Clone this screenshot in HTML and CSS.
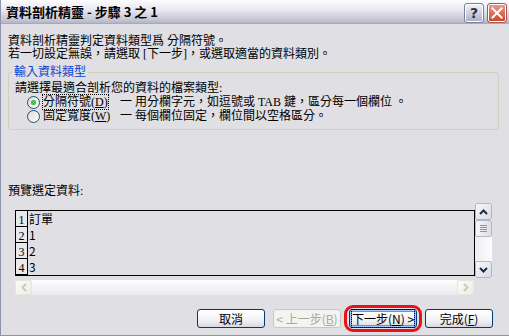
FILE: index.html
```html
<!DOCTYPE html>
<html lang="zh-Hant">
<head>
    <meta charset="UTF-8">
    <title>資料剖析精靈</title>
    <link rel="stylesheet" href="styles.css">
</head>
<body>

    <div class="window">
        <!-- Title Bar -->
        <div class="titlebar">
            <span class="title">資料剖析精靈 - 步驟 3 之 1</span>
            <div class="caption-buttons">
                <span class="cap-btn help">?</span>
                <span class="cap-btn close">
                    <svg width="12" height="12" viewBox="0 0 12 12"><path d="M1.5 1.5L10.5 10.5M10.5 1.5L1.5 10.5" stroke="#fff" stroke-width="2" stroke-linecap="square"/></svg>
                </span>
            </div>
        </div>

        <div class="content">
            <p class="intro">資料剖析精靈判定資料類型爲 分隔符號。</p>
            <p class="intro">若一切設定無誤，請選取 [下一步]，或選取適當的資料類別。</p>

            <!-- Data Type Group -->
            <fieldset class="group">
                <legend>輸入資料類型</legend>
                <p class="group-hint">請選擇最適合剖析您的資料的檔案類型:</p>
                <div class="option">
                    <span class="radio checked"></span>
                    <span class="opt-label"><span class="focus">分隔符號(<u>D</u>)</span></span>
                    <span class="opt-desc">一 用分欄字元，如逗號或 TAB 鍵，區分每一個欄位 。</span>
                </div>
                <div class="option">
                    <span class="radio"></span>
                    <span class="opt-label"><span class="nofocus">固定寬度(<u>W</u>)</span></span>
                    <span class="opt-desc">一 每個欄位固定，欄位間以空格區分。</span>
                </div>
            </fieldset>

            <p class="preview-label">預覽選定資料:</p>

            <!-- Preview -->
            <div class="preview-area">
                <div class="preview-top">
                    <div class="preview">
                        <div class="row"><span class="row-num">1</span><span class="row-data">訂單</span></div>
                        <div class="row"><span class="row-num">2</span><span class="row-data">1</span></div>
                        <div class="row"><span class="row-num">3</span><span class="row-data">2</span></div>
                        <div class="row"><span class="row-num">4</span><span class="row-data">3</span></div>
                    </div>
                    <div class="vscroll">
                        <span class="sb-btn">
                            <svg width="9" height="6" viewBox="0 0 9 6"><path d="M1 5L4.5 1.5L8 5" fill="none" stroke="#1f2a44" stroke-width="2"/></svg>
                        </span>
                        <span class="sb-thumb"><i></i><i></i><i></i><i></i></span>
                        <span class="sb-track"></span>
                        <span class="sb-btn">
                            <svg width="9" height="6" viewBox="0 0 9 6"><path d="M1 1L4.5 4.5L8 1" fill="none" stroke="#1f2a44" stroke-width="2"/></svg>
                        </span>
                    </div>
                </div>
                <div class="hscroll">
                    <span class="sb-btn disabled">
                        <svg width="6" height="9" viewBox="0 0 6 9"><path d="M5 1L1.5 4.5L5 8" fill="none" stroke="#c9c9c0" stroke-width="2"/></svg>
                    </span>
                    <span class="sb-btn disabled">
                        <svg width="6" height="9" viewBox="0 0 6 9"><path d="M1 1L4.5 4.5L1 8" fill="none" stroke="#c9c9c0" stroke-width="2"/></svg>
                    </span>
                </div>
            </div>

            <!-- Buttons -->
            <div class="buttons">
                <button class="btn">取消</button>
                <button class="btn" disabled>&lt; 上一步(<u>B</u>)</button>
                <span class="next-wrap">
                    <button class="btn default"><span class="focus">下一步(<u>N</u>) &gt;</span></button>
                    <span class="ring"></span>
                </span>
                <button class="btn">完成(<u>F</u>)</button>
            </div>
        </div>
    </div>

</body>
</html>
```

FILE: styles.css
```css
/* General */
* {
    box-sizing: border-box;
}

body {
    margin: 0;
    font-family: "Liberation Serif", "Noto Sans CJK TC", serif;
    font-size: 12px;
    color: #000;
    background: #e0dfe3;
}

p {
    margin: 0;
}

u {
    text-decoration: underline;
}

/* Window frame */
.window {
    width: 509px;
    height: 336px;
    background: #e0dfe3;
    border-left: 1px solid #8d93ad;
    border-bottom: 1px solid #8d93ad;
}

.titlebar {
    height: 24px;
    display: flex;
    align-items: flex-start;
    justify-content: space-between;
    background: linear-gradient(#fdfdfe, #e6e6ee 45%, #c6c6d6 85%, #b4b4c8);
    border-bottom: 1px solid #a9a9bd;
}

.title {
    font-family: "Noto Sans CJK TC", "Liberation Sans", sans-serif;
    font-weight: bold;
    font-size: 13px;
    line-height: 18px;
    margin: 3px 0 0 5px;
    color: #000;
}

.caption-buttons {
    display: flex;
    gap: 3px;
    margin: 3px 2px 0 0;
}

.cap-btn {
    width: 20px;
    height: 20px;
    border-radius: 3px;
    display: flex;
    align-items: center;
    justify-content: center;
}

.help {
    border: 1px solid #7d7e99;
    background: linear-gradient(#f4f4f8, #c9cad9 60%, #a9abc3);
    box-shadow: inset 0 0 0 1px #ffffff;
    font-family: "DejaVu Sans", sans-serif;
    font-weight: bold;
    font-size: 14px;
    color: #2e3145;
}

.close {
    border: 1px solid #a9584b;
    background: linear-gradient(#f0a08e, #db6a55 55%, #c5452f);
    box-shadow: inset 0 0 0 1px #ffffff;
}

/* Content */
.content {
    padding: 0 10px 0 7px;
}

.intro {
    line-height: 13px;
}

.intro:first-child {
    margin-top: 11px;
}

.group {
    margin: 5px 0 0;
    padding: 3px 0 6px 6px;
    border: 1px solid #d0d0bf;
    border-radius: 3px;
    min-width: 0;
}

.group legend {
    margin-left: -3px;
    padding: 0 2px;
    line-height: 13px;
    color: #0046d5;
}

.group-hint {
    line-height: 13px;
}

.option {
    display: flex;
    align-items: center;
    height: 14px;
    padding-left: 12px;
}

.radio {
    width: 13px;
    height: 13px;
    border-radius: 50%;
    border: 1px solid #1c5180;
    background: linear-gradient(135deg, #dcdad2, #ffffff);
    display: flex;
    align-items: center;
    justify-content: center;
    margin-right: 3px;
}

.radio.checked::after {
    content: "";
    width: 5px;
    height: 5px;
    border-radius: 50%;
    background: radial-gradient(#55d755, #21a121);
}

.opt-label {
    width: 77px;
    line-height: 12px;
}

.focus {
    outline: 1px dotted #000;
    outline-offset: 0;
}

.opt-desc {
    line-height: 13px;
}

/* Preview */
.preview-label {
    margin-top: 55px;
    line-height: 13px;
}

.preview-area {
    margin: 5px 0 0 7px;
}

.preview-top {
    display: flex;
    align-items: flex-start;
}

.preview {
    width: 460px;
    height: 66px;
    margin-top: 7px;
    border: 1px solid #000;
    overflow: hidden;
}

.row {
    display: flex;
    height: 16px;
}

.row-num {
    width: 12px;
    border-right: 1px solid #000;
    border-bottom: 1px solid #000;
    background: #e9e9ec;
    display: flex;
    align-items: flex-end;
    justify-content: center;
    line-height: 12px;
}

.row-data {
    padding-left: 1px;
    line-height: 15px;
    font-family: "Noto Sans CJK TC", "Liberation Serif", serif;
}

/* Scrollbars */
.vscroll {
    width: 17px;
    height: 75px;
    display: flex;
    flex-direction: column;
    background: linear-gradient(90deg, #eeeef3, #fdfdfe);
}

.sb-btn {
    width: 17px;
    height: 17px;
    border: 1px solid #b2b6c8;
    border-radius: 2px;
    background: linear-gradient(135deg, #f8f8fb, #d9dae6);
    display: flex;
    align-items: center;
    justify-content: center;
}

.sb-btn.disabled {
    border-color: #e6e6dc;
    background: linear-gradient(135deg, #fbfbf8, #eeeee6);
}

.sb-thumb {
    height: 17px;
    border: 1px solid #b2b6c8;
    border-radius: 2px;
    background: linear-gradient(90deg, #f8f8fb, #dcdde8);
    display: flex;
    flex-direction: column;
    align-items: center;
    justify-content: center;
    gap: 1px;
}

.sb-thumb i {
    width: 7px;
    height: 1px;
    background: #8e92a8;
}

.sb-track {
    flex: 1;
}

.hscroll {
    width: 459px;
    height: 15px;
    margin-top: 2px;
    display: flex;
    justify-content: space-between;
    background: linear-gradient(#fdfdfe, #eaeaef);
}

.hscroll .sb-btn {
    width: 17px;
    height: 15px;
}

/* Buttons */
.buttons {
    display: flex;
    justify-content: flex-end;
    gap: 8px;
    margin-top: 14px;
    padding-right: 6px;
}

.btn {
    width: 68px;
    height: 19px;
    padding: 0;
    font-family: "Noto Sans CJK TC", "Liberation Sans", sans-serif;
    font-size: 12px;
    line-height: 15px;
    color: #000;
    border: 1px solid #003c74;
    border-radius: 3px;
    background: linear-gradient(#ffffff, #f2f2f5 60%, #d8d8e2);
    cursor: pointer;
}

.btn:disabled {
    color: #aca899;
    border-color: #c9c7ba;
    background: #f3f3f1;
}

.btn.default {
    box-shadow: inset 0 0 0 1px #a6c4f5, inset 0 0 0 2px #6b8fe6;
}

.next-wrap {
    position: relative;
    display: flex;
}

.ring {
    position: absolute;
    left: -5px;
    top: -4px;
    width: 78px;
    height: 27px;
    border: 3px solid #e5141b;
    border-radius: 9px;
}
```
